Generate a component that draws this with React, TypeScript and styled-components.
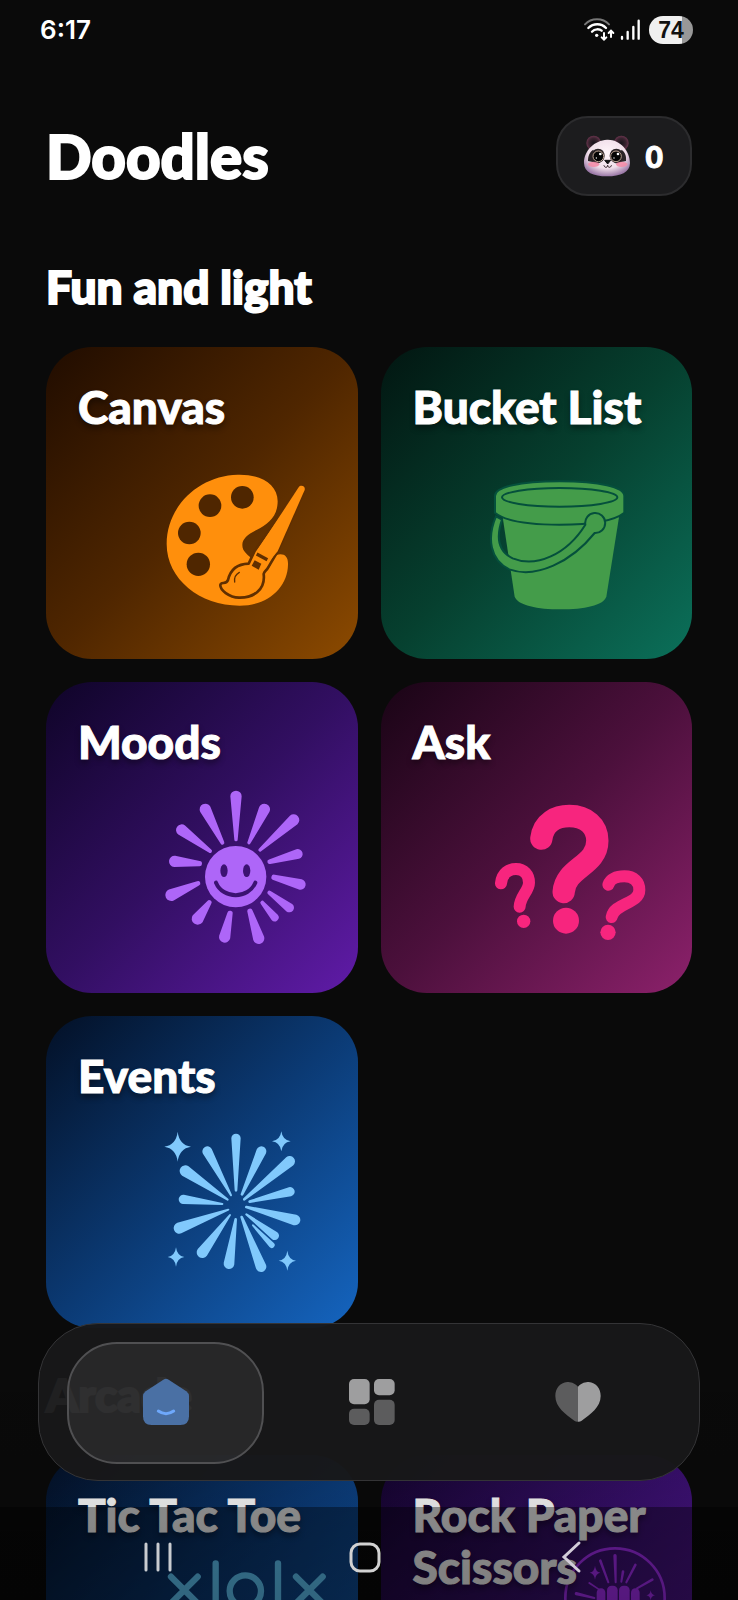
import React from "react";
import styled, { createGlobalStyle } from "styled-components";

const GlobalStyle = createGlobalStyle`
  *, *::before, *::after { box-sizing: border-box; }
  body {
    margin: 0;
    background: #0a0a0a;
    color: #fff;
    font-family: Lato, "Open Sans", sans-serif;
  }
  h1, h2, h3, p { margin: 0; }
  button { font: inherit; color: inherit; border: 0; padding: 0; background: none; cursor: pointer; }
  svg { display: block; overflow: visible; }
`;

const Screen = styled.div`
  position: relative;
  height: 100vh;
  overflow: hidden;
  background: #0a0a0a;
`;

const Scroller = styled.div`
  isolation: isolate;
  height: 100%;
  overflow-y: auto;
  scrollbar-width: none;
`;

const StatusBar = styled.div`
  display: flex;
  align-items: center;
  justify-content: space-between;
  height: 60px;
  padding: 0 45px 0 40px;
`;

const Clock = styled.time`
  font: 600 26px/32px Inter, sans-serif;
`;

const StatusIcons = styled.div`
  display: flex;
  align-items: center;
  gap: 8px;
`;

const Battery = styled.span`
  width: 44px;
  height: 28px;
  border-radius: 14px;
  background: linear-gradient(90deg, #f0f0f0 74%, #989898 74%);
  color: #111;
  font: 700 23px/28px "Liberation Sans", sans-serif;
  text-align: center;
`;

const Page = styled.main`
  padding: 0 46px 120px;
`;

const Header = styled.header`
  display: flex;
  align-items: center;
  justify-content: space-between;
  margin-top: 56px;
`;

const PageTitle = styled.h1`
  font-size: 60px;
  line-height: 72px;
  font-weight: 900;
  -webkit-text-stroke: 2px #fff;
  stroke-linejoin: round;
`;

const ScorePill = styled.button`
  display: flex;
  align-items: center;
  justify-content: space-between;
  width: 136px;
  height: 80px;
  padding: 0 27px 0 26px;
  border: 2px solid #2c2c2e;
  border-radius: 32px;
  background: #1c1c1e;
  font-size: 30px;
  line-height: 36px;
  font-weight: 900;
  -webkit-text-stroke: 1px #fff;
`;

const Section = styled.section<{ $gap: number }>`
  padding-top: ${(p) => p.$gap}px;
`;

const SectionTitle = styled.h2`
  margin-bottom: 33px;
  font-size: 46px;
  line-height: 54px;
  font-weight: 900;
  -webkit-text-stroke: 2px currentColor;
`;

const CardGrid = styled.div`
  display: grid;
  grid-template-columns: 1fr 1fr;
  gap: 23px;
`;

const Card = styled.button<{ $from: string; $mid: string; $to: string }>`
  display: grid;
  grid-template: minmax(0, 1fr) / minmax(0, 1fr);
  aspect-ratio: 1;
  padding: 34px 32px 44px 32px;
  border-radius: 46px;
  background: linear-gradient(135deg, ${(p) => p.$from}, ${(p) => p.$mid} 50%, ${(p) => p.$to});
  text-align: left;

  > * { grid-area: 1 / 1; }
  > svg {
    align-self: end;
    justify-self: end;
    margin-right: 10px;
  }
`;

const CardTitle = styled.span`
  z-index: 1;
  align-self: start;
  font-size: 46px;
  line-height: 52px;
  font-weight: 900;
  -webkit-text-stroke: 1px #fff;
  text-shadow: 0 4px 6px rgba(0, 0, 0, 0.45);
`;

const Scrim = styled.div`
  position: absolute;
  inset: auto 0 0 0;
  height: 277px;
  background: linear-gradient(rgba(0, 0, 0, 0), rgba(0, 0, 0, 0.2));
  pointer-events: none;
`;

const TabBar = styled.nav`
  position: absolute;
  inset: auto 38px 119px 38px;
  display: flex;
  gap: 9px;
  height: 158px;
  padding: 18px 23px 16px 28px;
  border: 1px solid #343436;
  border-radius: 60px;
  background: rgba(24, 24, 25, 0.965);
`;

const Tab = styled.button<{ $active?: boolean }>`
  flex: 1;
  display: grid;
  place-items: center;
  padding-bottom: 3px;
  border-radius: 50px;
  border: 2px solid ${(p) => (p.$active ? "#505052" : "transparent")};
  background: ${(p) => (p.$active ? "rgba(255, 255, 255, 0.07)" : "none")};
`;

const SystemBar = styled.div`
  position: absolute;
  inset: auto 0 0 0;
  display: flex;
  align-items: center;
  justify-content: space-between;
  height: 93px;
  padding: 6px 152px 0 142px;
  background: rgba(0, 0, 0, 0.38);
`;

const SystemButton = styled.button`
  display: grid;
  place-items: center;
  width: 30px;
`;

type RayData = [number, number, number, number, number, number];

/* A spoke that narrows from its outer end (x1, y1, r1) to its inner end (x2, y2, r2). */
function Ray({ d: [x1, y1, r1, x2, y2, r2] }: { d: RayData }) {
  const len = Math.hypot(x2 - x1, y2 - y1);
  const nx = -(y2 - y1) / len;
  const ny = (x2 - x1) / len;
  const path =
    `M${x1 + nx * r1},${y1 + ny * r1} A${r1},${r1} 0 0 1 ${x1 - nx * r1},${y1 - ny * r1} ` +
    `L${x2 - nx * r2},${y2 - ny * r2} A${r2},${r2} 0 0 1 ${x2 + nx * r2},${y2 + ny * r2} Z`;
  return <path d={path} />;
}

function Star({ x, y, w, h }: { x: number; y: number; w: number; h: number }) {
  const a = w * 0.12;
  const b = h * 0.12;
  return (
    <path
      d={`M${x},${y - h} Q${x + a},${y - b} ${x + w},${y} Q${x + a},${y + b} ${x},${y + h} Q${x - a},${y + b} ${x - w},${y} Q${x - a},${y - b} ${x},${y - h}Z`}
    />
  );
}

function Art({ x, y, children, ...rest }: { x: number; y: number; children: React.ReactNode } & Omit<React.SVGProps<SVGSVGElement>, "x" | "y">) {
  return (
    <svg width="160" height="160" viewBox={`${x} ${y} 480 480`} aria-hidden="true" {...rest}>
      {children}
    </svg>
  );
}

function PaletteArt() {
  const gap = "#602f00";
  return (
    <Art x={349} y={343} fill="#ff8f0c">
      <path d="M594 402C662 400 714 430 714 482C714 528 684 551 652 567C624 581 608 594 608 613C608 632 622 640 634 652L690 680C700 655 706 641 722 641C738 641 746 652 745 672C744 740 685 795 600 795C480 795 381 715 381 610C381 495 480 404 594 402Z" />
      <g fill="#4f2600">
        <circle cx="511" cy="495" r="34" />
        <circle cx="608" cy="470" r="34" />
        <circle cx="449" cy="577" r="34" />
        <circle cx="476" cy="671" r="35" />
      </g>
      <path d="M777 440C783 431 798 436 795 448L714 632L687 678C680 692 674 690 672 700C678 748 640 772 598 771C568 770 541 748 542 733C543 722 560 733 565 718C572 688 592 670 627 669L645 631Z" stroke={gap} strokeWidth="8" strokeLinejoin="round" />
      <path d="M777 440C783 431 798 436 795 448L714 632L694 656L651 632Z" />
      <path d="M651 640L683 657" stroke={gap} strokeWidth="10" />
      <path d="M645 659L665 669L657 687L636 675Z" fill={gap} />
      <path d="M585 724C583 710 588 701 599 695" stroke={gap} strokeWidth="4" fill="none" strokeLinecap="round" />
    </Art>
  );
}

function BucketArt() {
  const gap = "#05503c";
  return (
    <Art x={362} y={343} fill="#449c4a">
      <path d="M400 530L436 768C446 794 505 806 573 806C645 806 702 794 711 768L749 530Z" />
      <path d="M377 466C377 438 452 422 571 422C690 422 765 438 765 466V516C735 540 660 552 571 552C480 552 405 540 377 516Z" stroke={gap} strokeWidth="6" />
      <ellipse cx="571" cy="470" rx="173" ry="28" stroke={gap} strokeWidth="6" />
      <path d="M380 527C352 592 362 658 420 686C500 715 606 664 676 577A30 30 0 1 0 648 552C592 642 500 682 430 653C386 632 380 590 398 537Z" stroke={gap} strokeWidth="6" />
    </Art>
  );
}

const SUN_RAYS: RayData[] = [
  [589, 379, 17, 589, 509, 5], [674, 418, 17, 628, 518, 5], [762, 450, 17, 661, 540, 5],
  [774, 552, 15, 690, 575, 7], [782, 643, 16, 703, 622, 8], [749, 713, 14, 689, 668, 6],
  [705, 742, 12, 668, 698, 6], [657, 805, 17, 631, 724, 8], [555, 801, 17, 571, 730, 8],
  [474, 746, 18, 509, 697, 7], [395, 675, 18, 475, 640, 7], [405, 574, 17, 479, 581, 8],
  [426, 480, 17, 511, 543, 6], [497, 418, 17, 548, 518, 6],
];

function MoodArt() {
  return (
    <Art x={349} y={357} fill="#ae66f8">
      {SUN_RAYS.map((r, i) => <Ray key={i} d={r} />)}
      <circle cx="588" cy="620" r="92" />
      <g fill="#3c1272">
        <ellipse cx="553" cy="602" rx="11" ry="19" />
        <ellipse cx="621" cy="602" rx="11" ry="19" />
      </g>
      <path d="M529 638C550 688 626 688 647 638" fill="none" stroke="#3c1272" strokeWidth="12" strokeLinecap="round" />
    </Art>
  );
}

function AskArt() {
  return (
    <Art x={362} y={357} fill="none" stroke="#f7257e" strokeLinecap="round">
      <path d="M516 506C522 456 562 438 600 438C650 438 684 468 684 512C684 588 588 592 583 666" strokeWidth="67" />
      <path d="M395 640C398 608 420 597 440 597C464 597 479 614 479 638C479 662 452 680 451 710" strokeWidth="36" />
      <path d="M717 644C722 628 740 619 765 619C794 619 810 636 810 660C810 702 735 698 727 741" strokeWidth="36" />
      <g fill="#f7257e" stroke="none">
        <circle cx="590" cy="752" r="39" />
        <circle cx="463" cy="754" r="20" />
        <circle cx="716" cy="787" r="23" />
      </g>
    </Art>
  );
}

const FIREWORK_RAYS: RayData[] = [
  [589, 400, 14, 589, 556, 4], [665, 439, 15, 607, 568, 4], [750, 469, 16, 614, 583, 4],
  [751, 560, 14, 630, 590, 4], [766, 645, 16, 620, 606, 4], [705, 692, 13, 620, 628, 3],
  [696, 720, 9, 640, 661, 3], [664, 785, 16, 606, 636, 4], [568, 776, 16, 588, 643, 4],
  [488, 742, 17, 571, 630, 3], [419, 669, 17, 566, 614, 3], [431, 583, 14, 548, 597, 3],
  [437, 498, 17, 564, 584, 3], [503, 439, 15, 574, 571, 3],
];

function FireworkArt() {
  return (
    <Art x={349} y={357} fill="#81c9fc">
      {FIREWORK_RAYS.map((r, i) => <Ray key={i} d={r} />)}
      <Star x={414} y={425} w={40} h={45} />
      <Star x={725} y={409} w={28} h={30} />
      <Star x={409} y={756} w={25} h={29} />
      <Star x={743} y={767} w={26} h={30} />
    </Art>
  );
}

function TicTacToeArt() {
  return (
    <Art x={468} y={789} fill="none" stroke="#62ccff" strokeWidth="19" strokeLinecap="round">
      <path d="M513 833L593 913M593 833L513 913M647 793V1200M834 793V1200M888 833L968 913M968 833L888 913" />
      <circle cx="736" cy="876" r="47" />
    </Art>
  );
}

function FistArt() {
  return (
    <Art x={367} y={789} fill="#ac30fc">
      <circle cx="742" cy="897" r="149" fill="none" stroke="#ac30fc" strokeWidth="8" />
      <Ray d={[742, 770, 5, 744, 850, 3]} />
      <Ray d={[698, 785, 4, 722, 850, 3]} />
      <Ray d={[803, 798, 4, 776, 850, 3]} />
      <Ray d={[766, 818, 4, 761, 848, 3]} />
      <Ray d={[665, 852, 3, 695, 872, 2]} />
      <Ray d={[626, 884, 5, 680, 897, 3]} />
      <Ray d={[854, 842, 4, 808, 868, 3]} />
      <Star x={682} y={821} w={16} h={21} />
      <Star x={849} y={889} w={13} h={15} />
      <rect x="687" y="868" width="26" height="80" rx="13" />
      <rect x="718" y="860" width="32" height="90" rx="14" />
      <rect x="754" y="860" width="32" height="90" rx="14" />
      <rect x="790" y="868" width="26" height="80" rx="13" />
    </Art>
  );
}

function Panda() {
  return (
    <svg width="46" height="42" viewBox="0 0 138 126" role="img" aria-label="Panda">
      <defs>
        <radialGradient id="face" cx="50%" cy="38%" r="62%">
          <stop offset="0" stopColor="#fff6fa" />
          <stop offset="0.65" stopColor="#f1dfea" />
          <stop offset="1" stopColor="#9c7aa8" />
        </radialGradient>
        <radialGradient id="ear">
          <stop offset="0" stopColor="#17131a" />
          <stop offset="0.65" stopColor="#3a2430" />
          <stop offset="1" stopColor="#67334c" />
        </radialGradient>
      </defs>
      <circle cx="29" cy="24" r="22" fill="url(#ear)" />
      <circle cx="112" cy="24" r="22" fill="url(#ear)" />
      <path d="M69 14C106 12 138 46 138 84C138 112 110 124 69 124C28 124 0 112 0 84C0 46 32 16 69 14Z" fill="url(#face)" />
      <ellipse cx="41" cy="63" rx="21" ry="22" fill="#2b2427" transform="rotate(25 41 63)" />
      <ellipse cx="98" cy="63" rx="21" ry="22" fill="#2b2427" transform="rotate(-25 98 63)" />
      <path d="M12 78C12 60 18 50 28 44L30 82ZM126 78C128 60 122 50 112 44L108 82Z" fill="#2b2427" />
      <circle cx="43" cy="64" r="16" fill="#050505" stroke="#b9a090" strokeWidth="3" />
      <circle cx="96" cy="64" r="16" fill="#050505" stroke="#b9a090" strokeWidth="3" />
      <g fill="#fff">
        <circle cx="49" cy="57" r="4" /><circle cx="37" cy="69" r="2" />
        <circle cx="102" cy="57" r="4" /><circle cx="90" cy="69" r="2" />
      </g>
      <ellipse cx="29" cy="88" rx="17" ry="8" fill="#f58aa6" opacity="0.85" />
      <ellipse cx="113" cy="88" rx="17" ry="8" fill="#f58aa6" opacity="0.85" />
      <path d="M62 76H80L71 87Z" fill="#111" stroke="#111" strokeWidth="3" strokeLinejoin="round" />
      <path d="M60 92C62 99 70 99 71 91C72 99 80 99 82 92" fill="none" stroke="#2a1a20" strokeWidth="3" strokeLinecap="round" />
    </svg>
  );
}

function WifiSignal() {
  return (
    <svg width="57" height="24" viewBox="0 0 171 72" fill="none" strokeLinecap="round" aria-label="Wi-Fi and mobile signal" role="img">
      <path d="M3 19C22 -1 56 -1 75 19" stroke="#777" strokeWidth="6" />
      <path d="M13 30C28 15 52 15 66 30" stroke="#fff" strokeWidth="7" />
      <path d="M24 41C32 32 46 32 53 38" stroke="#fff" strokeWidth="7" />
      <circle cx="38" cy="52" r="5" fill="#fff" />
      <path d="M60 45V64M53 58L60 65L67 58M81 57V39M74 45L81 38L88 45" stroke="#fff" strokeWidth="6" />
      <path d="M114 57V62M131 42V62M148 27V62M164 8V62" stroke="#fff" strokeWidth="7" />
    </svg>
  );
}

function HomeIcon() {
  return (
    <svg width="46" height="46" viewBox="0 0 138 138" aria-hidden="true">
      <path d="M61 2Q69 -3 77 2L130 37Q138 43 138 52V112Q138 138 112 138H26Q0 138 0 112V52Q0 43 8 37Z" fill="#4a70a4" />
      <path d="M46 96Q69 112 92 96" fill="none" stroke="#6ea8fb" strokeWidth="9" strokeLinecap="round" />
    </svg>
  );
}

function GridIcon() {
  return (
    <svg width="46" height="46" viewBox="0 0 138 138" aria-hidden="true">
      <rect width="62" height="76" rx="15" fill="#9e9e9f" />
      <rect x="75" width="62" height="49" rx="15" fill="#9e9e9f" />
      <rect y="89" width="62" height="49" rx="15" fill="#5c5c5d" />
      <rect x="75" y="62" width="62" height="76" rx="15" fill="#5c5c5d" />
    </svg>
  );
}

function HeartIcon() {
  return (
    <svg width="46" height="40" viewBox="0 0 138 120" aria-hidden="true">
      <path d="M69 14C58 2 46 0 37 0C14 2 1 20 1 42C1 76 32 97 58 116Q64 120 69 119Z" fill="#5c5c5d" />
      <path d="M69 14C80 2 92 0 101 0C124 2 137 20 137 42C137 76 106 97 80 116Q74 120 69 119Z" fill="#9e9e9f" />
    </svg>
  );
}

type CardData = { title: string; colors: [string, string, string]; art: React.ReactNode };

const FUN: CardData[] = [
  { title: "Canvas", colors: ["#200c00", "#4f2600", "#8c4a00"], art: <PaletteArt /> },
  { title: "Bucket List", colors: ["#021611", "#06402f", "#0b705a"], art: <BucketArt /> },
  { title: "Moods", colors: ["#0f0428", "#320f62", "#601ba8"], art: <MoodArt /> },
  { title: "Ask", colors: ["#190415", "#4c103c", "#8c216b"], art: <AskArt /> },
  { title: "Events", colors: ["#031026", "#0b3a74", "#1565c0"], art: <FireworkArt /> },
];

const ARCADE: CardData[] = [
  { title: "Tic Tac Toe", colors: ["#031026", "#0b3c7a", "#1565c0"], art: <TicTacToeArt /> },
  { title: "Rock Paper Scissors", colors: ["#14042e", "#3a1070", "#601ba8"], art: <FistArt /> },
];

function Cards({ items }: { items: CardData[] }) {
  return (
    <CardGrid>
      {items.map(({ title, colors, art }) => (
        <Card key={title} type="button" $from={colors[0]} $mid={colors[1]} $to={colors[2]}>
          <CardTitle>{title}</CardTitle>
          {art}
        </Card>
      ))}
    </CardGrid>
  );
}

export default function App() {
  return (
    <Screen>
      <GlobalStyle />
      <Scroller>
        <StatusBar>
          <Clock>6:17</Clock>
          <StatusIcons>
            <WifiSignal />
            <Battery>74</Battery>
          </StatusIcons>
        </StatusBar>
        <Page>
          <Header>
            <PageTitle>Doodles</PageTitle>
            <ScorePill type="button">
              <Panda />
              <span>0</span>
            </ScorePill>
          </Header>
          <Section $gap={64}>
            <SectionTitle>Fun and light</SectionTitle>
            <Cards items={FUN} />
          </Section>
          <Section $gap={40}>
            <SectionTitle>Arcade</SectionTitle>
            <Cards items={ARCADE} />
          </Section>
        </Page>
      </Scroller>
      <Scrim />
      <TabBar aria-label="Main">
        <Tab type="button" $active aria-label="Home" aria-current="page"><HomeIcon /></Tab>
        <Tab type="button" aria-label="Doodles"><GridIcon /></Tab>
        <Tab type="button" aria-label="Favourites"><HeartIcon /></Tab>
      </TabBar>
      <SystemBar>
        <SystemButton type="button" aria-label="Recent apps">
          <svg width="27" height="30" viewBox="0 0 27 30" stroke="#c9ccd0" strokeWidth="3" strokeLinecap="round">
            <path d="M2 2V28M14 2V28M26 2V28" />
          </svg>
        </SystemButton>
        <SystemButton type="button" aria-label="System home">
          <svg width="31" height="30" viewBox="0 0 31 30" fill="none" stroke="#d2d2d2" strokeWidth="3">
            <rect x="2" y="2" width="28" height="27" rx="9" />
          </svg>
        </SystemButton>
        <SystemButton type="button" aria-label="Back">
          <svg width="18" height="30" viewBox="0 0 18 30" fill="none" stroke="#d2ccd8" strokeWidth="3" strokeLinecap="round">
            <path d="M17 1L2 15L17 29" />
          </svg>
        </SystemButton>
      </SystemBar>
    </Screen>
  );
}
